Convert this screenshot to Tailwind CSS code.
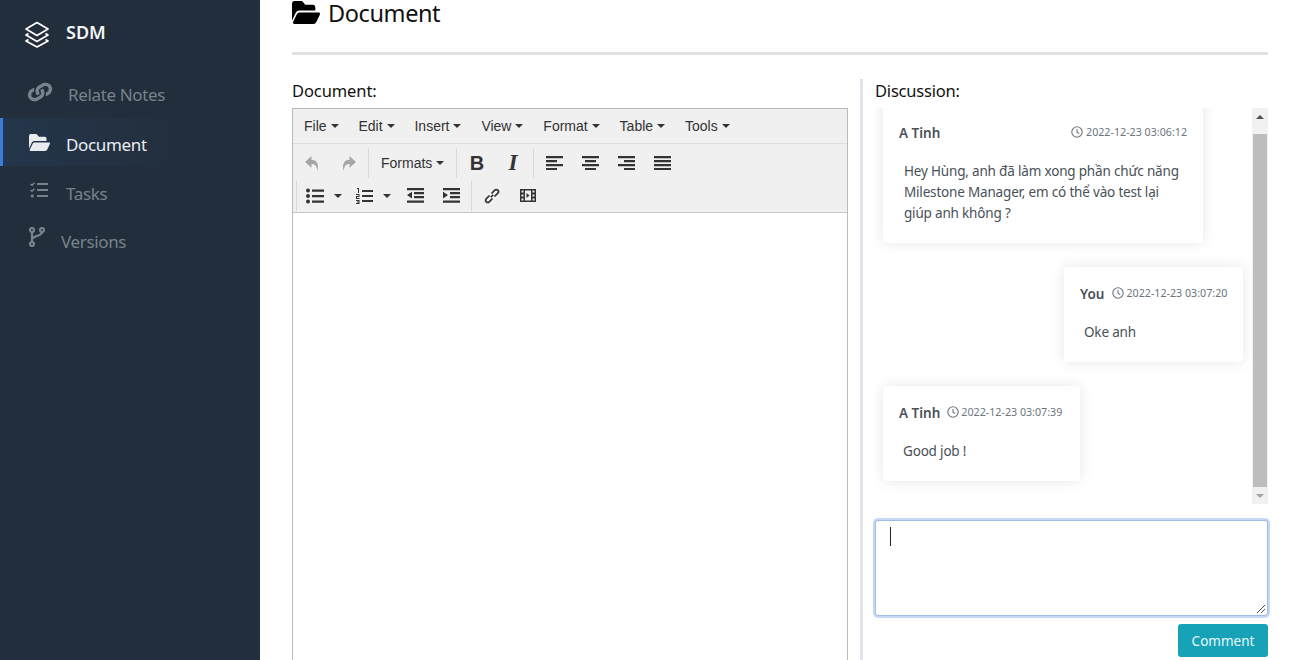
<!DOCTYPE html>
<html lang="en">
<head>
  <meta charset="UTF-8"/>
  <title>SDM - Document</title>
  <script src="https://cdn.jsdelivr.net/npm/@tailwindcss/browser@4"></script>
</head>
<body class="h-[660px] overflow-hidden bg-white font-['Noto_Sans',sans-serif]">
<svg class="hidden">
  <defs>
    <symbol id="folder" viewBox="0 64 576 384" preserveAspectRatio="none"><path fill="currentColor" d="M572.694 292.093L500.27 416.248A63.997 63.997 0 0 1 444.989 448H45.025c-18.523 0-30.064-20.093-20.731-36.093l72.424-124.155A64 64 0 0 1 152 256h399.964c18.523 0 30.064 20.093 20.73 36.093zM152 224h328v-48c0-26.51-21.49-48-48-48H272l-64-64H48C21.49 64 0 85.49 0 112v278.046l69.077-118.418C86.214 242.25 117.989 224 152 224z"/></symbol>
    <symbol id="clock" viewBox="0 0 12 12"><circle cx="6" cy="6" r="5.200" fill="none" stroke="currentColor" stroke-width="1.100"/><path d="M6 3v3.200l2.200 1.300" fill="none" stroke="currentColor" stroke-width="1.100"/></symbol>
    <symbol id="caret" viewBox="0 0 8 4"><path fill="currentColor" d="M0 0h8L4 4z"/></symbol>
  </defs>
</svg>

<div class="flex h-[660px]">
  <!-- Sidebar -->
  <aside class="w-[260px] shrink-0 bg-[#222e3c]">
    <div class="flex h-[71px] items-start pl-[25px] pt-[21px]">
      <svg class="h-[27px] w-[24px] text-white" viewBox="0 0 24 27" fill="none" stroke="currentColor" stroke-width="1.700" stroke-linejoin="round"><path d="M12 1.500 23 8 12 14.500 1 8z"/><path d="M3.500 12.500 1 14l11 6.500L23 14l-2.500-1.500"/><path d="M3.500 18.500 1 20l11 6 11-6-2.500-1.500"/></svg>
      <span class="-mt-[1px] ml-[17px] text-[18px] leading-[24px] font-semibold text-[#f3f4f5]">SDM</span>
    </div>
    <nav class="text-[17px] tracking-[-0.35px] text-[#78828c]">
      <a class="flex h-[47px] items-center pl-[29px]">
        <svg class="mb-[5px] h-[22px] w-[22px] rotate-[18deg]" viewBox="0 0 512 512"><path fill="currentColor" d="M326.612 185.391c59.747 59.809 58.927 155.698.36 214.59-.11.12-.24.25-.36.37l-67.2 67.2c-59.27 59.27-155.699 59.262-214.96 0-59.27-59.26-59.27-155.7 0-214.96l37.106-37.106c9.84-9.84 26.786-3.3 27.294 10.606.648 17.722 3.826 35.527 9.69 52.721 1.986 5.822.567 12.262-3.783 16.612l-13.087 13.087c-28.026 28.026-28.905 73.66-1.155 101.96 28.024 28.579 74.086 28.749 102.325.51l67.2-67.19c28.191-28.191 28.073-73.757 0-101.83-3.701-3.694-7.429-6.564-10.341-8.569a16.037 16.037 0 0 1-6.947-12.606c-.396-10.567 3.348-21.456 11.698-29.806l21.054-21.055c5.521-5.521 14.182-6.199 20.584-1.731a152.482 152.482 0 0 1 20.522 17.197zM467.547 44.449c-59.261-59.262-155.69-59.27-214.96 0l-67.2 67.2c-.12.12-.25.25-.36.37-58.566 58.892-59.387 154.781.36 214.59a152.454 152.454 0 0 0 20.521 17.196c6.402 4.468 15.064 3.789 20.584-1.731l21.054-21.055c8.35-8.35 12.094-19.239 11.698-29.806a16.037 16.037 0 0 0-6.947-12.606c-2.912-2.005-6.64-4.875-10.341-8.569-28.073-28.073-28.191-73.639 0-101.83l67.2-67.19c28.239-28.239 74.3-28.069 102.325.51 27.75 28.3 26.872 73.934-1.155 101.96l-13.087 13.087c-4.35 4.35-5.769 10.79-3.783 16.612 5.864 17.194 9.042 34.999 9.69 52.721.509 13.906 17.454 20.446 27.294 10.606l37.106-37.106c59.271-59.259 59.271-155.699.001-214.959z"/></svg>
        <span class="ml-[17px] pt-[1px] leading-[24px]">Relate Notes</span>
      </a>
      <a class="flex h-[48px] items-center border-l-[3px] border-[#3b7ddd] bg-gradient-to-r from-[#3b7ddd]/10 to-transparent to-[70%] pl-[26px] pt-[6px] text-[#e9ecef]">
        <svg class="mb-[6px] h-[17px] w-[21px]"><use href="#folder"/></svg>
        <span class="ml-[16px] leading-[24px]">Document</span>
      </a>
      <a class="flex h-[48px] items-center pl-[30px] pt-[6px]">
        <svg class="mb-[6px] h-[16px] w-[18px]" viewBox="0 0 18 16" fill="none" stroke="currentColor" stroke-width="2.200"><path d="M7 2h11M7 8h11M7 14h11"/><path stroke-width="1.500" d="M.5 2 2 3.300 4.500.7M.5 8 2 9.300 4.500 6.700"/><circle cx="2.300" cy="14" r="1.600" fill="currentColor" stroke="none"/></svg>
        <span class="ml-[18px] pt-[1px] leading-[24px]">Tasks</span>
      </a>
      <a class="flex h-[48px] items-center pl-[29px] pt-[6px]">
        <svg class="mb-[8px] h-[20px] w-[16px]" viewBox="0 0 16 20" fill="none" stroke="currentColor" stroke-width="2.200"><circle cx="3" cy="3" r="2"/><circle cx="3" cy="17" r="2"/><circle cx="13" cy="3" r="2"/><path d="M3 5v10M13 5c0 4.800-10 3-10 8"/></svg>
        <span class="ml-[16px] pt-[1px] leading-[24px]">Versions</span>
      </a>
    </nav>
  </aside>

  <!-- Main -->
  <main class="flex min-w-0 flex-1 flex-col pl-[32px] pr-[27px]">
    <div class="flex h-[52px] shrink-0 items-start">
      <svg class="mt-[1px] h-[23px] w-[28px] text-black"><use href="#folder"/></svg>
      <h1 class="ml-[8px] text-[23.500px] leading-[26px] tracking-[-0.4px] text-[#111]">Document</h1>
    </div>
    <div class="h-[3px] shrink-0 bg-[#e2e2e2]"></div>

    <div class="mt-[24px] flex min-h-0 flex-1">
      <!-- Editor column -->
      <section class="w-[556px] shrink-0 overflow-hidden">
        <div class="h-[29px] text-[16.500px] leading-[24px] tracking-[-0.1px] text-[#111]">Document:</div>
        <div class="h-[600px] border border-[#b9b9b9] font-['Liberation_Sans',sans-serif] text-[14px] text-[#333]">
          <div class="flex h-[35px] items-center gap-[19.900px] border-b border-[#ddd] bg-[#f0f0f0] pl-[11px]">
            <span class="flex items-center gap-[4px]">File<svg class="h-[4px] w-[8px]"><use href="#caret"/></svg></span>
            <span class="flex items-center gap-[4px]">Edit<svg class="h-[4px] w-[8px]"><use href="#caret"/></svg></span>
            <span class="flex items-center gap-[4px]">Insert<svg class="h-[4px] w-[8px]"><use href="#caret"/></svg></span>
            <span class="flex items-center gap-[4px]">View<svg class="h-[4px] w-[8px]"><use href="#caret"/></svg></span>
            <span class="flex items-center gap-[4px]">Format<svg class="h-[4px] w-[8px]"><use href="#caret"/></svg></span>
            <span class="flex items-center gap-[4px]">Table<svg class="h-[4px] w-[8px]"><use href="#caret"/></svg></span>
            <span class="flex items-center gap-[4px]">Tools<svg class="h-[4px] w-[8px]"><use href="#caret"/></svg></span>
          </div>
          <div class="border-b border-[#c5c5c5] bg-[#f0f0f0]">
            <!-- first row -->
            <div class="flex h-[35px] items-center pl-[1px] pt-[3px]">
              <span class="flex h-[32px] w-[36px] items-center justify-center text-[#a6a6a6]">
                <svg class="h-[17px] w-[17px]" viewBox="0 0 16 16"><path fill="currentColor" d="M7 1 1 6.500 7 12V8.500c3 0 5 1 5.500 6.500 2-6-.5-10.500-5.500-10.500z"/></svg>
              </span>
              <span class="flex h-[32px] w-[36px] items-center justify-center text-[#a6a6a6]">
                <svg class="h-[17px] w-[17px] -scale-x-100" viewBox="0 0 16 16"><path fill="currentColor" d="M7 1 1 6.500 7 12V8.500c3 0 5 1 5.500 6.500 2-6-.5-10.500-5.500-10.500z"/></svg>
              </span>
              <span class="ml-[2px] h-[30px] w-px bg-[#d9d9d9]"></span>
              <span class="flex w-[87px] items-center gap-[4px] pl-[12px]">Formats<svg class="h-[4px] w-[8px]"><use href="#caret"/></svg></span>
              <span class="h-[30px] w-px bg-[#d9d9d9]"></span>
              <span class="ml-[2px] flex h-[32px] w-[36px] items-center justify-center text-[20px] font-bold text-[#333]">B</span>
              <span class="flex h-[32px] w-[36px] items-center justify-center font-['Liberation_Serif',serif] text-[23px] font-bold text-[#333] italic">I</span>
              <span class="ml-[2px] h-[30px] w-px bg-[#d9d9d9]"></span>
              <span class="ml-[2px] flex h-[32px] w-[36px] items-center justify-center">
                <svg class="h-[14px] w-[17px]" viewBox="0 0 17 14"><path fill="#333" d="M0 0h17v2.200H0zM0 4h11v2.200H0zM0 8h17v2.200H0zM0 12h11v2H0z"/></svg>
              </span>
              <span class="flex h-[32px] w-[36px] items-center justify-center">
                <svg class="h-[14px] w-[17px]" viewBox="0 0 17 14"><path fill="#333" d="M0 0h17v2.200H0zM3 4h11v2.200H3zM0 8h17v2.200H0zM3 12h11v2H3z"/></svg>
              </span>
              <span class="flex h-[32px] w-[36px] items-center justify-center">
                <svg class="h-[14px] w-[17px]" viewBox="0 0 17 14"><path fill="#333" d="M0 0h17v2.200H0zM6 4h11v2.200H6zM0 8h17v2.200H0zM6 12h11v2H6z"/></svg>
              </span>
              <span class="flex h-[32px] w-[36px] items-center justify-center">
                <svg class="h-[14px] w-[17px]" viewBox="0 0 17 14"><path fill="#333" d="M0 0h17v2.200H0zM0 4h17v2.200H0zM0 8h17v2.200H0zM0 12h17v2H0z"/></svg>
              </span>
            </div>
            <!-- second row -->
            <div class="flex h-[33px] items-center pl-[3px]">
              <span class="h-[30px] w-px bg-[#d9d9d9]"></span>
              <span class="ml-[9px] flex h-[32px] w-[18px] items-center">
                <svg class="h-[16px] w-[18px]" viewBox="0 0 18 16"><path fill="#333" d="M6 1.500h12v2.200H6zM6 7h12v2.200H6zM6 12.500h12v2.200H6z"/><circle cx="2" cy="2.600" r="2" fill="#333"/><circle cx="2" cy="8" r="2" fill="#333"/><circle cx="2" cy="13.500" r="2" fill="#333"/></svg>
              </span>
              <svg class="ml-[10px] h-[4px] w-[8px]"><use href="#caret"/></svg>
              <span class="ml-[14px] flex h-[32px] w-[18px] items-center">
                <svg class="h-[16px] w-[17px]" viewBox="0 0 17 16"><path fill="#333" d="M6 2h11v2H6zM6 7h11v2H6zM6 12h11v2H6zM1 0h2v5H2V1H1zM0 6h3.500v3H1v1h2.500v1H0V8h2.500V7H0zM0 12h3.500v4H0v-1h2.500v-.5H1v-1h1.500V13H0z"/></svg>
              </span>
              <svg class="ml-[9px] h-[4px] w-[8px]"><use href="#caret"/></svg>
              <span class="ml-[6px] flex h-[32px] w-[36px] items-center justify-center">
                <svg class="h-[15px] w-[17px]" viewBox="0 0 17 15"><path fill="#333" d="M0 0h17v2.200H0zM7 4h10v2.200H7zM7 8h10v2.200H7zM0 12.500h17v2.200H0zM5 3.800V10.500L0 7z"/></svg>
              </span>
              <span class="flex h-[32px] w-[36px] items-center justify-center">
                <svg class="h-[15px] w-[17px]" viewBox="0 0 17 15"><path fill="#333" d="M0 0h17v2.200H0zM7 4h10v2.200H7zM7 8h10v2.200H7zM0 12.500h17v2.200H0zM0 3.800V10.500L5 7z"/></svg>
              </span>
              <span class="ml-[2px] h-[30px] w-px bg-[#d9d9d9]"></span>
              <span class="flex h-[32px] w-[40px] items-center justify-center">
                <svg class="h-[16px] w-[16px]" viewBox="0 0 16 16" fill="none" stroke="#333" stroke-width="1.700"><path d="M6.800 9.200 9.200 6.800"/><path d="M5.500 7.500 2.200 10.800a2.100 2.100 0 0 0 3 3L8.500 10.500"/><path d="M10.500 8.500l3.300-3.300a2.100 2.100 0 0 0-3-3L7.500 5.500"/></svg>
              </span>
              <span class="flex h-[32px] w-[32px] items-center justify-center">
                <svg class="h-[13px] w-[16px]" viewBox="0 0 16 13"><path fill="#333" fill-rule="evenodd" d="M0 0h16v13H0zM1.500 1.500v2h2v-2zM1.500 5.500v2h2v-2zM1.500 9.500v2h2v-2zM12.500 1.500v2h2v-2zM12.500 5.500v2h2v-2zM12.500 9.500v2h2v-2zM5 1.500v10h6v-10z"/><path fill="#333" d="M6.500 4v5l3-2.500z"/></svg>
              </span>
            </div>
          </div>
        </div>
      </section>

      <!-- Discussion column -->
      <section class="ml-[12px] flex flex-1 flex-col border-l-[3px] border-[#e2e2e9] pl-[12px]">
        <div class="h-[29px] text-[16.500px] leading-[24px] tracking-[-0.2px] text-[#111]">Discussion:</div>
        <div class="flex h-[396px] shrink-0">
          <div class="min-w-0 flex-1 overflow-hidden pl-[8px] pr-[9px] text-[#495057]">
            <div class="-mt-[20px] flex flex-col gap-[24px] pb-[23px]">
              <article class="h-[155px] w-[320px] rounded-[3px] bg-white pl-[16px] pr-[16px] pt-[35px] shadow-[0_0_14px_rgba(0,0,0,0.1)]">
                <div class="flex items-center justify-between">
                  <b class="text-[13.500px] leading-[20px] font-semibold">A Tinh</b>
                  <span class="-mt-[1px] flex items-center gap-[3px] text-[10.700px] text-[#6c757d]"><svg class="h-[12px] w-[12px]"><use href="#clock"/></svg>2022-12-23 03:06:12</span>
                </div>
                <p class="mt-[18px] pl-[5px] text-[13.500px] leading-[21px] tracking-[-0.18px]">Hey Hùng, anh đã làm xong phần chức năng Milestone Manager, em có thể vào test lại giúp anh không ?</p>
              </article>
              <article class="h-[95px] w-[179px] self-end rounded-[3px] bg-white pl-[16px] pt-[17px] shadow-[0_0_14px_rgba(0,0,0,0.1)]">
                <div class="flex items-center gap-[8px]">
                  <b class="text-[13.500px] leading-[20px] font-semibold">You</b>
                  <span class="-mt-[1px] flex items-center gap-[2px] text-[10.700px] text-[#6c757d]"><svg class="h-[12px] w-[12px]"><use href="#clock"/></svg>2022-12-23 03:07:20</span>
                </div>
                <p class="mt-[18px] pl-[4px] text-[13.500px] leading-[21px] tracking-[-0.18px]">Oke anh</p>
              </article>
              <article class="h-[95px] w-[197px] rounded-[3px] bg-white pl-[16px] pt-[17px] shadow-[0_0_14px_rgba(0,0,0,0.1)]">
                <div class="flex items-center gap-[7px]">
                  <b class="text-[13.500px] leading-[20px] font-semibold">A Tinh</b>
                  <span class="-mt-[1px] flex items-center gap-[2px] text-[10.700px] text-[#6c757d]"><svg class="h-[12px] w-[12px]"><use href="#clock"/></svg>2022-12-23 03:07:39</span>
                </div>
                <p class="mt-[18px] pl-[4px] text-[13.500px] leading-[21px] tracking-[-0.18px]">Good job !</p>
              </article>
            </div>
          </div>
          <!-- scrollbar -->
          <div class="flex w-[16px] shrink-0 flex-col bg-[#f1f1f1]">
            <div class="flex h-[26px] items-start justify-center pt-[7px]"><svg class="h-[4px] w-[8px] rotate-180 text-[#505050]"><use href="#caret"/></svg></div>
            <div class="mx-auto h-[353px] w-[14px] bg-[#bdbdbd]"></div>
            <div class="flex flex-1 items-center justify-center"><svg class="h-[4px] w-[8px] text-[#a3a3a3]"><use href="#caret"/></svg></div>
          </div>
        </div>
        <div class="relative mt-[16px] h-[96px] shrink-0 rounded-[3px] border border-[#9fbce8] bg-white shadow-[0_0_0_2px_rgba(59,125,221,0.3)]">
          <span class="absolute left-[14px] top-[6px] h-[19px] w-px bg-[#222]"></span>
          <svg class="absolute bottom-[1px] right-[1px] h-[10px] w-[10px]" viewBox="0 0 10 10" stroke="#555" stroke-width="1"><path d="M1 9 9 1M5 9l4-4"/></svg>
        </div>
        <div class="mt-[8px] flex justify-end">
          <button class="h-[33px] w-[90px] rounded-[3px] bg-[#17a2b8] pt-[1px] text-[13.500px] text-[#e8fafc]">Comment</button>
        </div>
      </section>
    </div>
  </main>
</div>
</body>
</html>
